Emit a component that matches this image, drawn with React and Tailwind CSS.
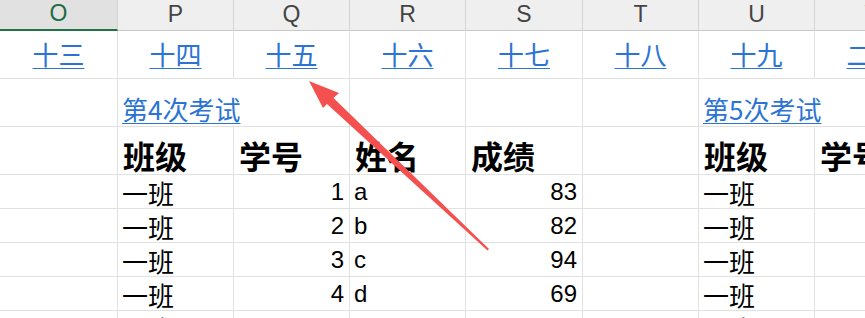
import React from 'react';

const cols = ['O', 'P', 'Q', 'R', 'S', 'T', 'U', 'V'];
const widths = [118, 116, 116, 116, 117, 116, 116, 116];

const links = ['十三', '十四', '十五', '十六', '十七', '十八', '十九', '二十'];

const rows = [
  ['83', 'a'],
  ['82', 'b'],
  ['94', 'c'],
  ['69', 'd'],
];

const cjk = { fontFamily: '"Noto Sans CJK SC", sans-serif' };
const latin = { fontFamily: '"Liberation Sans", "Noto Sans CJK SC", sans-serif' };

const Cell = ({ className = '', children, noRight, style }) => (
  <div
    className={`relative flex border-b border-[#e1e1e1] whitespace-nowrap overflow-visible ${noRight ? '' : 'border-r'} ${className}`}
    style={style}
  >
    {children}
  </div>
);

const App = () => {
  return (
    <div className="relative w-[865px] h-[318px] overflow-hidden bg-white text-black">
      <div
        className="grid grid-cols-[118px_116px_116px_116px_117px_116px_116px_116px] grid-rows-[31px_48px_48px_48px_34px_34px_34px_34px_34px]"
        style={{ width: widths.reduce((a, b) => a + b, 0) }}
      >
        {/* column headers */}
        {cols.map((c, i) => (
          <div
            key={c}
            className={`flex items-center justify-center border-r border-[#d4d4d4] text-[23px] pb-[2px] ${
              i === 0
                ? 'bg-[#e1e1e1] border-b-2 border-b-[#217346] text-[#1e6b43]'
                : 'bg-[#efefef] border-b border-b-[#c9c9c9] text-[#444444]'
            }`}
            style={latin}
          >
            {c}
          </div>
        ))}

        {/* row 1: links */}
        {links.map((t) => (
          <Cell key={t} className="items-center justify-center pb-[2px]">
            <span className="text-[26px] leading-none text-[#2b74d3] underline underline-offset-[3px] decoration-1" style={cjk}>
              {t}
            </span>
          </Cell>
        ))}

        {/* row 2: titles */}
        <Cell />
        <Cell noRight className="items-end pl-[4px] pb-[4px]">
          <span className="text-[26px] leading-none text-[#2b74d3] underline underline-offset-[3px] decoration-1" style={cjk}>
            第4次考试
          </span>
        </Cell>
        <Cell />
        <Cell />
        <Cell />
        <Cell />
        <Cell noRight className="items-end pl-[4px] pb-[4px]">
          <span className="text-[26px] leading-none text-[#2b74d3] underline underline-offset-[3px] decoration-1" style={cjk}>
            第5次考试
          </span>
        </Cell>
        <Cell />

        {/* row 3: table headings */}
        <Cell />
        {['班级', '学号', '姓名', '成绩'].map((h) => (
          <Cell key={h} className="items-end pl-[5px] pb-[3px]">
            <span className="text-[32px] leading-none font-bold" style={cjk}>{h}</span>
          </Cell>
        ))}
        <Cell />
        <Cell className="items-end pl-[5px] pb-[3px]">
          <span className="text-[32px] leading-none font-bold" style={cjk}>班级</span>
        </Cell>
        <Cell className="items-end pl-[5px] pb-[3px]">
          <span className="text-[32px] leading-none font-bold" style={cjk}>学号</span>
        </Cell>

        {/* data rows */}
        {rows.map(([score, name], i) => (
          <React.Fragment key={i}>
            <Cell />
            <Cell className="items-end pl-[4px] pb-[2px]">
              <span className="text-[26px] leading-none" style={cjk}>一班</span>
            </Cell>
            <Cell className="items-end justify-end pr-[5px] pb-[4px]">
              <span className="text-[24px] leading-none" style={latin}>{i + 1}</span>
            </Cell>
            <Cell className="items-end pl-[4px] pb-[4px]">
              <span className="text-[24px] leading-none" style={latin}>{name}</span>
            </Cell>
            <Cell className="items-end justify-end pr-[5px] pb-[4px]">
              <span className="text-[24px] leading-none" style={latin}>{score}</span>
            </Cell>
            <Cell />
            <Cell className="items-end pl-[4px] pb-[2px]">
              <span className="text-[26px] leading-none" style={cjk}>一班</span>
            </Cell>
            <Cell />
          </React.Fragment>
        ))}

        {/* partial row at the bottom */}
        <Cell />
        <Cell className="items-end pl-[4px] pb-[2px]">
          <span className="text-[26px] leading-none" style={cjk}>一班</span>
        </Cell>
        <Cell />
        <Cell />
        <Cell />
        <Cell />
        <Cell className="items-end pl-[4px] pb-[2px]">
          <span className="text-[26px] leading-none" style={cjk}>一班</span>
        </Cell>
        <Cell />
      </div>

      {/* red annotation arrow */}
      <svg className="absolute left-0 top-0 pointer-events-none" width="865" height="318" viewBox="0 0 865 318">
        <polygon
          points="309,81 339,93 333.5,98 489,249 487.5,250.5 327,104 323,108"
          fill="#f55050"
        />
      </svg>
    </div>
  );
};

export default App;
